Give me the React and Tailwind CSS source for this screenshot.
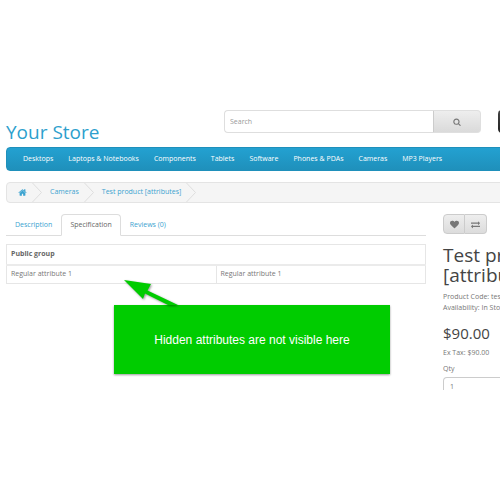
import React, { useState } from 'react';

const SANS = "font-['Open_Sans',sans-serif]";

const MENU = ['Desktops', 'Laptops & Notebooks', 'Components', 'Tablets', 'Software', 'Phones & PDAs', 'Cameras', 'MP3 Players'];

const TABS = ['Description', 'Specification', 'Reviews (0)'];

const ICONS = {
  search: 'M1216 832q0-185-131.5-316.5t-316.5-131.5-316.5 131.5-131.5 316.5 131.5 316.5 316.5 131.5 316.5-131.5 131.5-316.5zm512 832q0 52-38 90t-90 38q-54 0-90-38l-343-342q-179 124-399 124-143 0-273.5-55.5t-225-150-150-225-55.5-273.5 55.5-273.5 150-225 225-150 273.5-55.5 273.5 55.5 225 150 150 225 55.5 273.5q0 220-124 399l343 343q37 37 37 90z',
  home: 'M1472 992v480q0 26-19 45t-45 19h-384v-384h-256v384h-384q-26 0-45-19t-19-45v-480q0-1 .5-3t.5-3l575-474 575 474q1 2 1 6zm223-69l-62 74q-8 9-21 11h-3q-13 0-21-7l-692-577-692 577q-12 8-24 7-13-2-21-11l-62-74q-8-10-7-23.5t11-21.5l719-599q32-26 76-26t76 26l244 204v-195q0-14 9-23t23-9h192q14 0 23 9t9 23v408l219 182q10 8 11 21.5t-7 23.5z',
  heart: 'M896 1664q-26 0-44-18l-624-602q-10-8-27.5-26t-55.5-65.5-68-97.5-53.5-121-23.5-138q0-220 127-344t351-124q62 0 126.5 21.5t120 58 95.5 68.5 76 68q36-36 76-68t95.5-68.5 120-58 126.5-21.5q224 0 351 124t127 344q0 221-229 450l-623 600q-18 18-44 18z',
  exchange: 'M1792 1184v192q0 13-9.5 22.5t-22.5 9.5h-1376v192q0 13-9.5 22.5t-22.5 9.5q-12 0-24-10l-319-320q-9-9-9-22 0-14 9-23l320-320q9-9 23-9 13 0 22.5 9.5t9.5 22.5v192h1376q13 0 22.5 9.5t9.5 22.5zm0-544q0 14-9 23l-320 320q-9 9-23 9-13 0-22.5-9.5t-9.5-22.5v-192h-1376q-13 0-22.5-9.5t-9.5-22.5v-192q0-13 9.5-22.5t22.5-9.5h1376v-192q0-14 9-23t23-9q12 0 24 10l319 319q9 9 9 23z',
};

function Icon({ name, className }) {
  return (
    <svg viewBox="0 0 1792 1792" className={className} fill="currentColor" aria-hidden="true">
      <path d={ICONS[name]} />
    </svg>
  );
}

function Header() {
  return (
    <header className="flex items-start">
      <div className="w-[218px] pt-2">
        <a href="#home" className="text-[19px] leading-7 text-[#2d9fcd]">Your Store</a>
      </div>
      <form className="flex h-[23px] w-[257px]" onSubmit={(e) => e.preventDefault()}>
        <input
          type="text"
          aria-label="Search"
          placeholder="Search"
          className="min-w-0 flex-1 rounded-l border border-r-0 border-[#dedede] px-[5px] pt-px text-[7px] placeholder:text-[#999]"
        />
        <button type="submit" aria-label="Search" className="flex w-12 items-center justify-center rounded-r border border-[#dfdfdf] border-l-[#ccc] bg-linear-to-b from-[#eee] to-[#dadada] text-[#777]">
          <Icon name="search" className="size-2" />
        </button>
      </form>
      <button type="button" aria-label="Cart" className="ml-[17px] h-[23px] flex-1 rounded bg-linear-to-b from-[#444] to-[#222]" />
    </header>
  );
}

function Chevron() {
  return (
    <svg viewBox="0 0 10 19" className="h-[19px] w-[10px]" fill="none" stroke="#dedede" aria-hidden="true">
      <path d="M0.5 0L9.5 9.5L0.5 19" />
    </svg>
  );
}

function Breadcrumb() {
  const crumb = 'flex h-full items-center gap-[5px]';
  return (
    <nav aria-label="Breadcrumb" className="mt-[11px] h-[21px] rounded-sm border border-[#e4e4e4] bg-[#f5f5f5]">
      <ol className="flex h-full gap-2 pl-[11px] text-[7px] text-[#3ba3d0]">
        <li className={crumb}>
          <a href="#home" aria-label="Home"><Icon name="home" className="size-[9px]" /></a>
          <Chevron />
        </li>
        <li className={crumb}>
          <a href="#cameras">Cameras</a>
          <Chevron />
        </li>
        <li className={crumb}>
          <a href="#product">Test product [attributes]</a>
          <Chevron />
        </li>
      </ol>
    </nav>
  );
}

function Specification() {
  return (
    <table className="mt-2 w-full table-fixed border border-[#e6e6e6] text-[7px] leading-[10px]">
      <thead>
        <tr className="h-5 border-b-2 border-[#ebebeb]">
          <th colSpan={2} className="px-1 text-left font-bold text-[#666]">Public group</th>
        </tr>
      </thead>
      <tbody>
        <tr className="h-[19px]">
          <td className="border-r border-[#e6e6e6] px-1">Regular attribute 1</td>
          <td className="px-1">Regular attribute 1</td>
        </tr>
      </tbody>
    </table>
  );
}

function Callout() {
  return (
    <div className="absolute top-[91px] left-[108px] flex h-[69px] w-[276px] items-center justify-center bg-[#00cc00] shadow-[0_1px_2px_rgba(0,0,0,0.4)]">
      <svg viewBox="0 0 56 26" className="absolute bottom-full left-[9px] h-[26px] w-[56px] drop-shadow-[1px_1px_1px_rgba(0,0,0,0.4)]" aria-hidden="true">
        <path d="M1 1L28 5L24.500 11.500L55 26H45L22 14.500L20 20Z" fill="#00cc00" />
      </svg>
      <p className="font-['Liberation_Sans',sans-serif] text-[12px] leading-4 text-white">Hidden attributes are not visible here</p>
    </div>
  );
}

function Product() {
  const action = 'flex h-5 w-[22px] items-center justify-center border border-[#ccc] bg-linear-to-b from-[#eee] to-[#dcdcdc] text-[#777]';
  return (
    <section className="min-w-0 flex-1 text-[7px] leading-[11px]">
      <div className="flex">
        <button type="button" aria-label="Add to wish list" className={`${action} rounded-l-sm`}>
          <Icon name="heart" className="size-[9px]" />
        </button>
        <button type="button" aria-label="Compare this product" className={`${action} rounded-r-sm border-l-0`}>
          <Icon name="exchange" className="size-[9px]" />
        </button>
      </div>
      <h1 className="mt-[11px] text-[19px] leading-5 text-[#444]">Test product<br />[attributes]</h1>
      <ul className="mt-[6px]">
        <li>Product Code: test</li>
        <li>Availability: In Stock</li>
      </ul>
      <h2 className="mt-2 text-[15px] leading-6 text-[#444]">$90.00</h2>
      <p className="mt-[2px]">Ex Tax: $90.00</p>
      <label htmlFor="qty" className="mt-[5px] block">Qty</label>
      <input id="qty" type="text" defaultValue="1" className="mt-[3px] block h-[13px] w-full rounded-t-sm border border-b-0 border-[#ccc] px-[6px] pt-[5px] text-[7px]" />
    </section>
  );
}

export default function App() {
  const [tab, setTab] = useState('Specification');

  return (
    <div className={`overflow-hidden bg-white pt-[110px] text-[#777] ${SANS}`}>
      <div className="min-w-[590px] pl-[6px] whitespace-nowrap">
        <Header />
        <nav aria-label="Main" className="mt-[1px] h-6 rounded-sm border border-[#1f90bb] bg-linear-to-b from-[#23a1d1] to-[#1f90bb]">
          <ul className="flex h-full items-center gap-[15px] pt-px pl-4 text-[7px] text-white">
            {MENU.map((item) => (
              <li key={item}><a href="#menu">{item}</a></li>
            ))}
          </ul>
        </nav>
        <Breadcrumb />
        <main className="mt-[11px] flex gap-[17px]">
          <div className="relative w-[420px] shrink-0">
            <div role="tablist" className="flex h-[22px] border-b border-[#ddd] text-[7px]">
              {TABS.map((t) => (
                <button
                  key={t}
                  type="button"
                  role="tab"
                  aria-selected={tab === t}
                  onClick={() => setTab(t)}
                  className={`-mb-px rounded-t-sm border px-2 pt-px ${tab === t ? 'border-[#ddd] border-b-white bg-white text-[#666]' : 'border-transparent text-[#3ba3d0]'}`}
                >
                  {t}
                </button>
              ))}
            </div>
            <Specification />
            <Callout />
          </div>
          <Product />
        </main>
      </div>
    </div>
  );
}
